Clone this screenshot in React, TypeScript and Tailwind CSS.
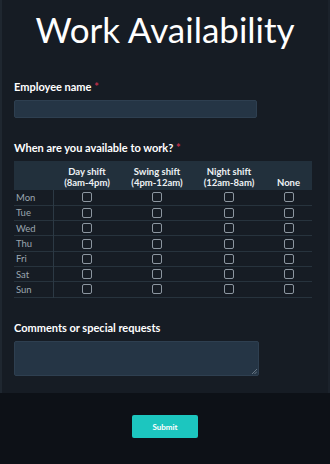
import React from "react";

const days = ["Mon", "Tue", "Wed", "Thu", "Fri", "Sat", "Sun"];
const shifts = [
  ["Day shift", "(8am-4pm)", "w-[68px]"],
  ["Swing shift", "(4pm-12am)", "w-[72px]"],
  ["Night shift", "(12am-8am)", "w-[72px]"],
  ["", "None", "w-[47px]"],
];

function Box() {
  return <div className="mx-auto h-[10px] w-[10px] rounded-[2px] border-[1.5px] border-[#8c96a0]" />;
}

export default function App() {
  return (
    <div className="flex h-[464px] w-[330px] flex-col bg-[#0d1117]" style={{ fontFamily: "Lato, 'Open Sans', sans-serif" }}>
      <div className="flex h-[393px] flex-col border-l-2 border-r-2 border-l-[#1f2730] border-r-[#1b222b] bg-[#161c24] px-3">
        <h1 className="mt-[7px] text-center text-[35px] font-normal leading-[44px] text-white">Work Availability</h1>
        <div className="mt-[29px] text-[11px] font-bold leading-[14px] text-white">
          Employee name <span className="text-[#c0304a]">*</span>
        </div>
        <div className="mt-[6px] h-[18px] w-[243px] rounded-[2px] border border-[#2e3f50] bg-[#253545]" />
        <div className="mt-[23px] text-[11px] font-bold leading-[14px] text-white">
          When are you available to work? <span className="text-[#c0304a]">*</span>
        </div>
        <table className="mt-[6px] w-[298px] table-fixed border-collapse text-[9.5px]">
          <thead>
            <tr className="h-[29px] bg-[#22303c]">
              <th className="w-[39px]" />
              {shifts.map((s, i) => (
                <th key={i} className={`${s[2]} pb-[2px] align-bottom font-bold leading-[11px] text-[#eef2f5]`}>
                  {s[0] && <div>{s[0]}</div>}
                  <div>{s[1]}</div>
                </th>
              ))}
            </tr>
          </thead>
          <tbody>
            {days.map((d) => (
              <tr key={d} className="h-[15.3px] border-b border-[#27333d]">
                <td className="border-r border-[#2c3944] pl-[2px] text-left leading-[11px] text-[#9ba6b0]">{d}</td>
                {shifts.map((_, i) => (
                  <td key={i}>
                    <Box />
                  </td>
                ))}
              </tr>
            ))}
          </tbody>
        </table>
        <div className="mt-[23px] text-[11px] font-bold leading-[14px] text-white">Comments or special requests</div>
        <div className="relative mt-[6px] h-[35px] w-[245px] rounded-[2px] border border-[#2e3f50] bg-[#253545]">
          <svg className="absolute bottom-[1px] right-[1px]" width="5" height="5" viewBox="0 0 5 5">
            <path d="M5 0 L0 5 M5 2.5 L2.5 5" stroke="#7a8894" strokeWidth="0.8" />
          </svg>
        </div>
      </div>
      <div className="flex justify-center pt-[22px]">
        <button className="h-[23px] w-[66px] rounded-[2px] bg-[#1cc6bf] text-[8px] font-bold text-white">Submit</button>
      </div>
    </div>
  );
}
